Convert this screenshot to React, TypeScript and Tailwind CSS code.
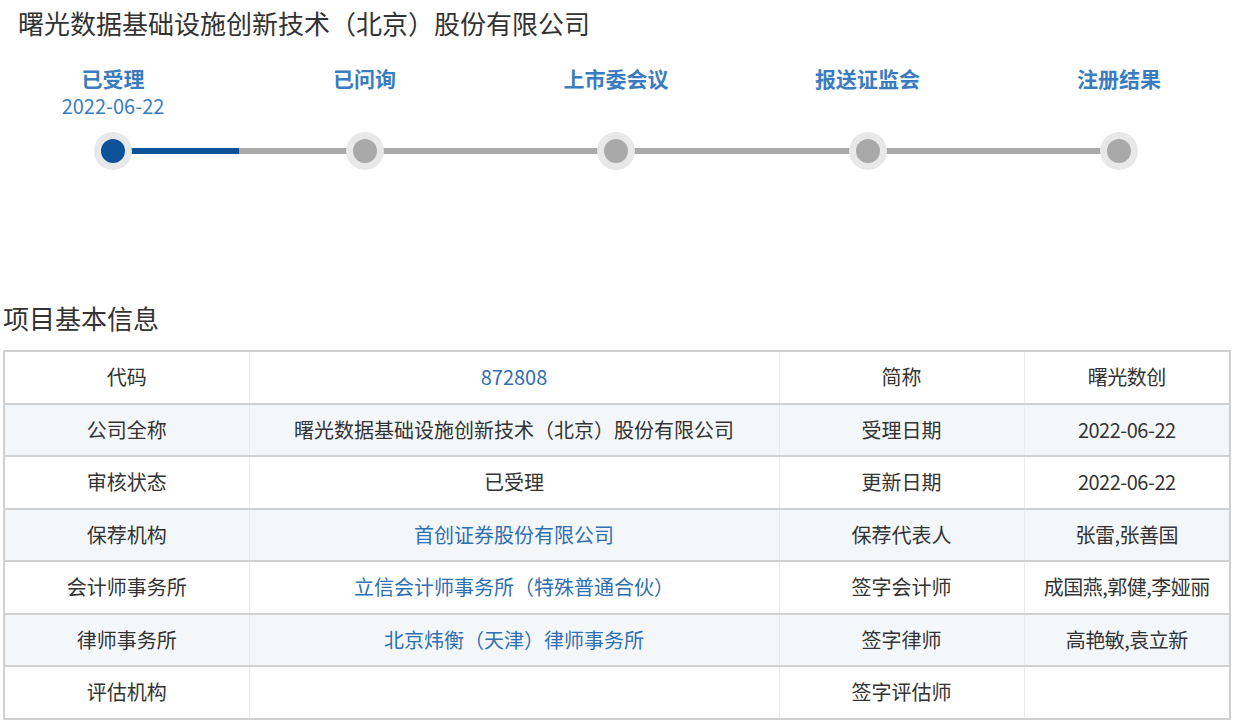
const F = { fontFamily: '"Noto Sans CJK SC","Noto Sans",sans-serif' };
const steps = [["已受理", "2022-06-22"], ["已问询", ""], ["上市委会议", ""], ["报送证监会", ""], ["注册结果", ""]];
const rows: [string, string, boolean, string, string][] = [
  ["代码", "872808", true, "简称", "曙光数创"],
  ["公司全称", "曙光数据基础设施创新技术（北京）股份有限公司", false, "受理日期", "2022-06-22"],
  ["审核状态", "已受理", false, "更新日期", "2022-06-22"],
  ["保荐机构", "首创证券股份有限公司", true, "保荐代表人", "张雷,张善国"],
  ["会计师事务所", "立信会计师事务所（特殊普通合伙）", true, "签字会计师", "成国燕,郭健,李娅丽"],
  ["律师事务所", "北京炜衡（天津）律师事务所", true, "签字律师", "高艳敏,袁立新"],
  ["评估机构", "", false, "签字评估师", ""],
];
export default function App() {
  return (
    <div style={F} className="w-[1234px] h-[725px] bg-white text-[#333] overflow-hidden">
      <div className="pl-[18px] pt-[4px] text-[26px] leading-[38px] text-[#333] whitespace-nowrap">曙光数据基础设施创新技术（北京）股份有限公司</div>
      <div className="relative ml-[12px] w-[1208px] h-[246px]">
        <div className="absolute left-[101px] top-[106px] w-[1006px] h-[6px] bg-[#a9a9a9]" />
        <div className="absolute left-[101px] top-[106px] w-[126px] h-[6px] bg-[#0b5299]" />
        {steps.map(([t, d], i) => (
          <div key={t} className="absolute top-0 flex flex-col items-center" style={{ left: 101 + i * 251.5 - 100, width: 200 }}>
            <div className="mt-[22px] text-[21px] font-bold text-[#3a7cc0] leading-[28px]">{t}</div>
            <div className="text-[20px] text-[#3a7cc0] leading-[28px] h-[28px]">{d}</div>
            <div className="mt-[12px] w-[38px] h-[38px] rounded-full bg-[#e8e8e8] flex items-center justify-center">
              <div className={`w-[24px] h-[24px] rounded-full ${i === 0 ? "bg-[#0b5299]" : "bg-[#a9a9a9]"}`} />
            </div>
          </div>
        ))}
      </div>
      <div className="pl-[3px] text-[26px] leading-[36px] mt-[12px]">项目基本信息</div>
      <table className="ml-[3px] mt-[14px] w-[1226px] border-collapse text-[20px] table-fixed">
        <colgroup><col className="w-[245px]" /><col className="w-[530px]" /><col className="w-[245px]" /><col className="w-[206px]" /></colgroup>
        <tbody>
          {rows.map((r, i) => (
            <tr key={i} className={`h-[52.5px] border-y-2 border-[#d0d0d0] ${i % 2 ? "bg-[#f4f7fa]" : "bg-white"}`}>
              <td className="text-center border-x border-[#ececec] border-l-2 border-l-[#d0d0d0]">{r[0]}</td>
              <td className={`text-center border-x border-[#ececec] whitespace-nowrap ${r[2] ? "text-[#2f6fb3]" : ""}`}>{r[1]}</td>
              <td className="text-center border-x border-[#ececec]">{r[3]}</td>
              <td className="text-center border-x border-[#ececec] border-r-2 border-r-[#d0d0d0] whitespace-nowrap tracking-[-0.5px]">{r[4]}</td>
            </tr>
          ))}
        </tbody>
      </table>
    </div>
  );
}
